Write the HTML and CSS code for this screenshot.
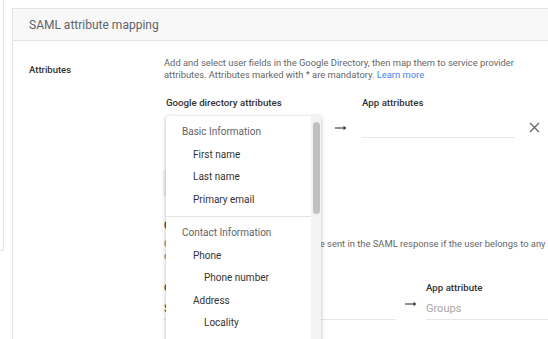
FILE: index.html
```html
<!DOCTYPE html>
<html>
<head>
    <title>SAML attribute mapping</title>
    <link rel="stylesheet" href="styles.css">
</head>
<body>
    <div class="page">
        <div class="side-stub"></div>
        <div class="card">
            <div class="card-header">SAML attribute mapping</div>
            <div class="card-body">
                <div class="label">Attributes</div>
                <div class="content">
                    <p class="desc">Add and select user fields in the Google Directory, then map them to service provider attributes. Attributes marked with * are mandatory. <a href="#">Learn more</a></p>

                    <div class="map-grid">
                        <div class="col-title">Google directory attributes</div>
                        <div></div>
                        <div class="col-title">App attributes</div>
                        <div></div>

                        <div class="select-field"></div>
                        <div class="arrow">
                            <svg width="12" height="6" viewBox="0 0 12 6"><path d="M0 3h10.5" stroke="#444" stroke-width="1.2"/><path d="M8.5 0.8 11.5 3 8.5 5.2z" fill="#444"/></svg>
                        </div>
                        <div class="text-field"></div>
                        <div class="remove">
                            <svg width="11" height="11" viewBox="0 0 11 11"><path d="M1 1l9 9M10 1l-9 9" stroke="#666" stroke-width="1.3"/></svg>
                        </div>
                    </div>

                    <div class="add-btn">Add mapping</div>

                    <div class="section-title">Group membership (optional)</div>
                    <p class="desc">Group membership information can be sent in the SAML response if the user belongs to any of the groups that you add here.</p>

                    <div class="group-row">
                        <div class="group-left">
                            <div class="col-title">Google groups</div>
                            <div class="group-input">Search for a group</div>
                        </div>
                        <div class="arrow group-arrow">
                            <svg width="12" height="6" viewBox="0 0 12 6"><path d="M0 3h10.5" stroke="#444" stroke-width="1.2"/><path d="M8.5 0.8 11.5 3 8.5 5.2z" fill="#444"/></svg>
                        </div>
                        <div class="group-right">
                            <div class="col-title">App attribute</div>
                            <div class="group-input placeholder">Groups</div>
                        </div>
                    </div>
                </div>

                <div class="menu">
                    <div class="menu-list">
                        <div class="menu-group">Basic Information</div>
                        <div class="menu-item">First name</div>
                        <div class="menu-item">Last name</div>
                        <div class="menu-item">Primary email</div>
                        <div class="menu-divider"></div>
                        <div class="menu-group">Contact Information</div>
                        <div class="menu-item">Phone</div>
                        <div class="menu-item sub">Phone number</div>
                        <div class="menu-item">Address</div>
                        <div class="menu-item sub">Locality</div>
                    </div>
                    <div class="menu-track"><div class="menu-thumb"></div></div>
                </div>
            </div>
        </div>
    </div>
</body>
</html>
```

FILE: styles.css
```css
html, body {
    margin: 0;
    padding: 0;
    overflow: hidden;
    background: #fff;
    font-family: Roboto, "Liberation Sans", sans-serif;
    color: #3c4043;
}
.page {
    display: flex;
    gap: 8px;
    width: 640px;
    height: 339px;
    overflow: hidden;
}
.side-stub {
    width: 3px;
    height: 250px;
    border-right: 1px solid #e3e3e3;
    border-bottom: 1px solid #e3e3e3;
    flex: none;
}
.card {
    margin-top: 8px;
    width: 600px;
    height: 400px;
    border: 1px solid #e3e3e3;
    border-right: none;
    flex: none;
}
.card-header {
    height: 31px;
    line-height: 32px;
    padding-left: 16px;
    background: #f8f8f8;
    border-bottom: 1px solid #e3e3e3;
    font-size: 12px;
    color: #5f6368;
}
.card-body {
    position: relative;
    display: flex;
    padding: 16px 0 0 16px;
}
.label {
    width: 135px;
    flex: none;
    font-size: 9.5px;
    font-weight: 500;
    color: #333;
    padding-top: 7px;
}
.content {
    width: 386px;
    font-size: 9.4px;
}
.desc {
    margin: 0;
    line-height: 11.5px;
    color: #666;
}
.desc a {
    color: #4285f4;
    text-decoration: none;
}
.map-grid {
    display: grid;
    grid-template-columns: 155px 41px 153px 30px;
    margin: 16px 0 0 2px;
    row-gap: 8px;
}
.col-title {
    font-size: 9.7px;
    font-weight: 500;
    color: #333;
    line-height: 13px;
}
.select-field {
    height: 22px;
}
.arrow {
    display: flex;
    align-items: center;
    padding-left: 14px;
    height: 10px;
    margin-top: 6px;
}
.text-field {
    height: 20px;
    border-bottom: 1px solid #e6e6e6;
}
.remove {
    padding: 5px 0 0 14px;
}
.add-btn {
    margin-top: 31px;
    width: 90px;
    height: 25px;
    background: #f1f1f1;
    border-radius: 2px;
    box-shadow: 0 1px 2px rgba(0, 0, 0, 0.2);
    color: #f1f1f1;
    font-size: 1px;
}
.section-title {
    margin-top: 24px;
    font-size: 10px;
    font-weight: 500;
    color: #333;
    line-height: 13px;
}
.section-title + .desc {
    margin-top: 6px;
}
.group-row {
    display: flex;
    margin-top: 20px;
    width: 400px;
}
.group-left {
    width: 232px;
}
.group-right {
    flex: 1;
}
.group-row .col-title {
    margin-bottom: 5px;
}
.group-arrow {
    width: 30px;
    box-sizing: border-box;
    padding-left: 9px;
    margin-top: 18px;
}
.group-input {
    height: 20px;
    line-height: 20px;
    border-bottom: 1px solid #e6e6e6;
    font-size: 11px;
    color: #333;
}
.group-left .group-input {
    margin-top: 2px;
}
.group-input.placeholder {
    color: #a8a8a8;
}
.menu {
    position: absolute;
    left: 153px;
    top: 75px;
    width: 155px;
    height: 260px;
    display: flex;
    background: #fff;
    box-shadow: 0 1px 4px rgba(0, 0, 0, 0.28);
    border-radius: 2px;
}
.menu-list {
    flex: 1;
    padding-top: 5px;
    font-size: 10px;
}
.menu-group, .menu-item {
    height: 22.5px;
    line-height: 22.5px;
    padding-left: 16px;
    color: #5f6368;
    white-space: nowrap;
}
.menu-item {
    padding-left: 27px;
    color: #333;
}
.menu-item.sub {
    padding-left: 38px;
}
.menu-divider {
    height: 1px;
    background: #e3e3e3;
    margin: 5px 0 5px;
}
.menu-track {
    width: 7px;
    background: #f3f3f3;
    padding: 6px 1px 0 2px;
}
.menu-thumb {
    height: 92px;
    background: #c1c1c1;
    border-radius: 4px;
}
```
